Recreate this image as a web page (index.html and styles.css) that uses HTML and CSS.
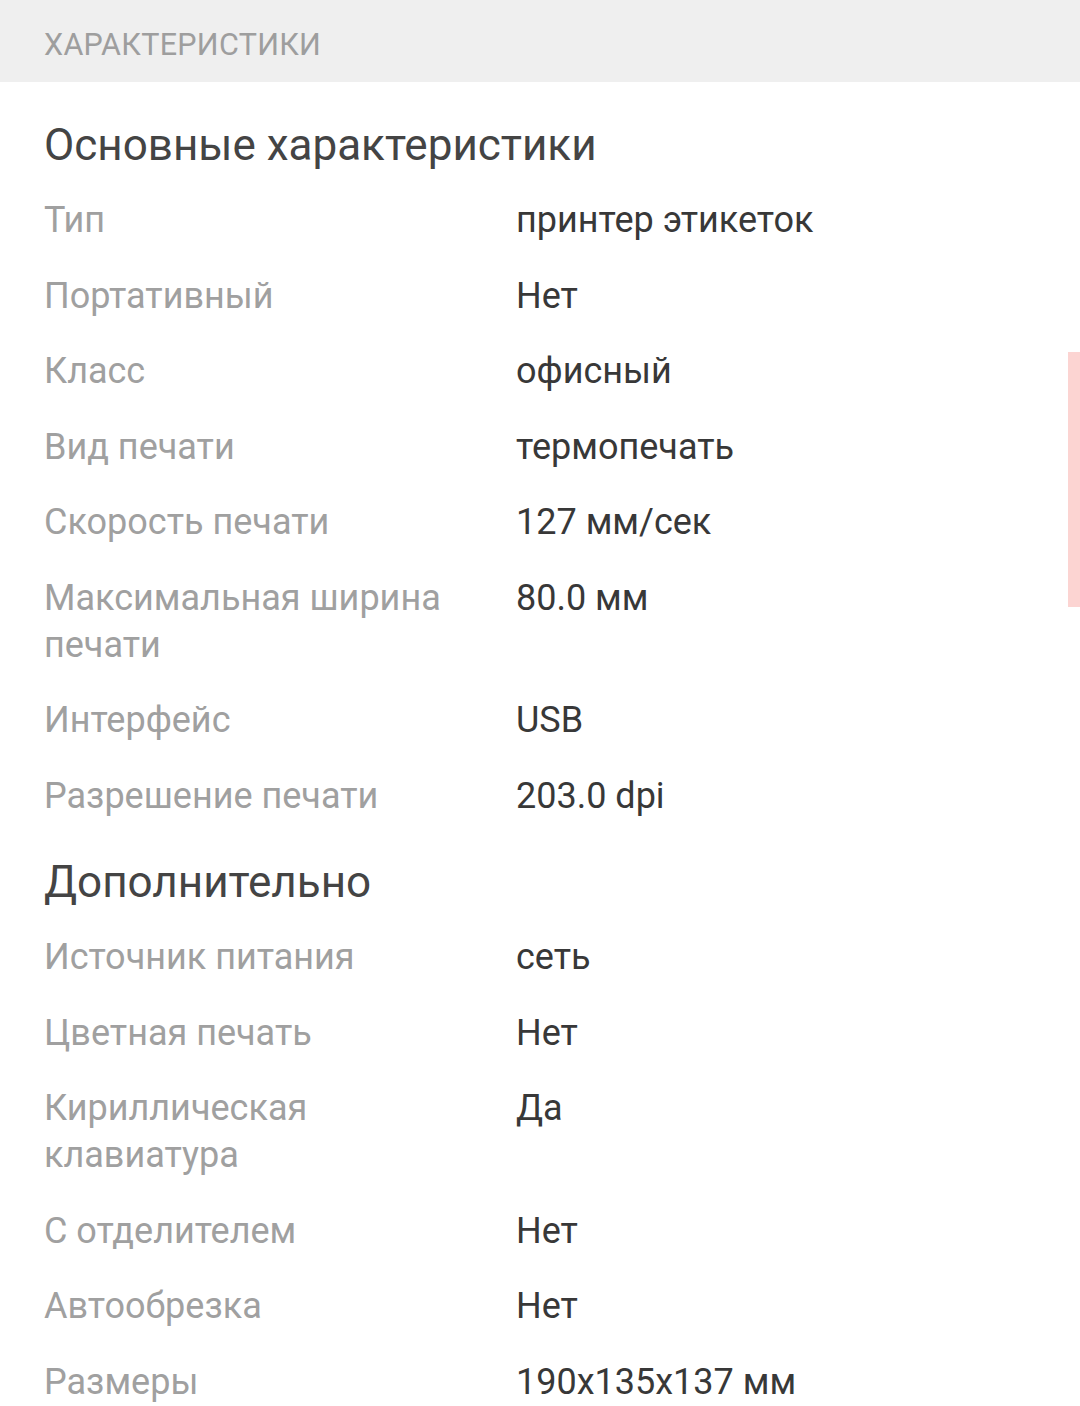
FILE: index.html
```html
<!DOCTYPE html>
<html lang="ru">
<head>
<meta charset="utf-8">
<link rel="stylesheet" href="styles.css">
</head>
<body>
<div class="page">
  <div class="topbar"><span class="topbar-title">ХАРАКТЕРИСТИКИ</span></div>
  <div class="content">
    <section class="group first">
      <h2 class="group-title">Основные характеристики</h2>
      <div class="row"><div class="label">Тип</div><div class="value">принтер этикеток</div></div>
      <div class="row"><div class="label">Портативный</div><div class="value">Нет</div></div>
      <div class="row"><div class="label">Класс</div><div class="value">офисный</div></div>
      <div class="row"><div class="label">Вид печати</div><div class="value">термопечать</div></div>
      <div class="row"><div class="label">Скорость печати</div><div class="value">127 мм/сек</div></div>
      <div class="row"><div class="label">Максимальная ширина печати</div><div class="value">80.0 мм</div></div>
      <div class="row"><div class="label">Интерфейс</div><div class="value">USB</div></div>
      <div class="row"><div class="label">Разрешение печати</div><div class="value">203.0 dpi</div></div>
    </section>
    <section class="group">
      <h2 class="group-title">Дополнительно</h2>
      <div class="row"><div class="label">Источник питания</div><div class="value">сеть</div></div>
      <div class="row"><div class="label">Цветная печать</div><div class="value">Нет</div></div>
      <div class="row"><div class="label">Кириллическая клавиатура</div><div class="value">Да</div></div>
      <div class="row"><div class="label">С отделителем</div><div class="value">Нет</div></div>
      <div class="row"><div class="label">Автообрезка</div><div class="value">Нет</div></div>
      <div class="row"><div class="label">Размеры</div><div class="value">190x135x137 мм</div></div>
    </section>
  </div>
  <div class="scrollbar"></div>
</div>
</body>
</html>
```
FILE: styles.css
```css
html, body {
  margin: 0;
  padding: 0;
  background: #ffffff;
}
body {
  font-family: Roboto, "Noto Sans", "Liberation Sans", sans-serif;
  overflow: hidden;
}
.page {
  position: relative;
  width: 1080px;
  height: 1406px;
  overflow: hidden;
}
.topbar {
  height: 82px;
  background: #efefef;
  display: flex;
  align-items: center;
  padding: 6px 44px 0;
  box-sizing: border-box;
}
.topbar-title {
  font-size: 30.5px;
  color: #9e9e9e;
  letter-spacing: 0.3px;
}
.content {
  padding: 0 44px;
}
.group {
  padding-top: 20px;
}
.group.first {
  padding-top: 35px;
}
.group-title {
  margin: 0 0 10px;
  font-size: 44px;
  font-weight: 400;
  line-height: 56px;
  color: #444444;
}
.row {
  display: grid;
  grid-template-columns: 472px 1fr;
  padding: 14.25px 0;
  font-size: 36px;
  line-height: 47px;
}
.label {
  color: #a0a0a0;
  padding-right: 24px;
}
.value {
  color: #383838;
}
.scrollbar {
  position: absolute;
  right: 0;
  top: 352px;
  width: 12px;
  height: 255px;
  background: #fcd4d2;
}
```
